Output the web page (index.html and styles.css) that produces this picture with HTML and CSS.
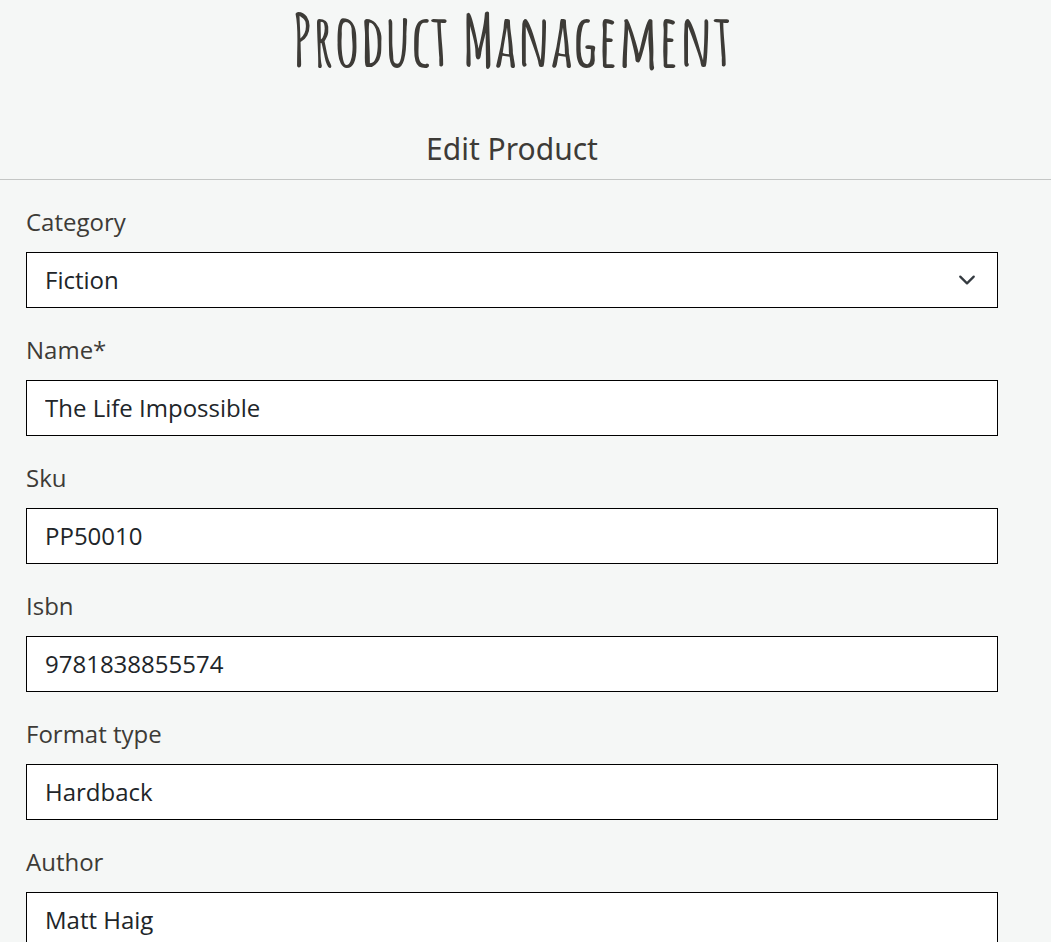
FILE: index.html
```html
<!DOCTYPE html>
<html lang="en">
<head>
<meta charset="utf-8">
<meta name="viewport" content="width=device-width, initial-scale=1">
<title>Product Management</title>
<link rel="stylesheet" href="styles.css">
</head>
<body>
<header class="page-header">
  <h1 class="page-title">Product Management</h1>
  <h2 class="page-subtitle">Edit Product</h2>
</header>
<hr class="divider">
<form class="product-form">
  <div class="field">
    <label class="field-label" for="category">Category</label>
    <div class="select-wrap">
      <select class="control select" id="category"><option>Fiction</option></select>
      <svg class="chevron" viewBox="0 0 16 16" aria-hidden="true"><path d="M2 5l6 6 6-6"/></svg>
    </div>
  </div>
  <div class="field">
    <label class="field-label" for="name">Name*</label>
    <input class="control" id="name" type="text" value="The Life Impossible">
  </div>
  <div class="field">
    <label class="field-label" for="sku">Sku</label>
    <input class="control" id="sku" type="text" value="PP50010">
  </div>
  <div class="field">
    <label class="field-label" for="isbn">Isbn</label>
    <input class="control" id="isbn" type="text" value="9781838855574">
  </div>
  <div class="field">
    <label class="field-label" for="format">Format type</label>
    <input class="control" id="format" type="text" value="Hardback">
  </div>
  <div class="field">
    <label class="field-label" for="author">Author</label>
    <input class="control" id="author" type="text" value="Matt Haig">
  </div>
</form>
</body>
</html>
```
FILE: styles.css
```css
* { box-sizing: border-box; }
html { overflow: hidden; }
body {
  margin: 0;
  background: #f5f7f6;
  color: #3d3b37;
  font: 24px/36px "Open Sans", "Noto Sans", sans-serif;
}
.page-header {
  padding-right: 27px;
  text-align: center;
}
.page-title {
  margin: 0;
  padding-bottom: 49px;
  font-family: "Amatic SC", "Open Sans", sans-serif;
  font-size: 72px;
  line-height: 80px;
  font-weight: 700;
}
.page-subtitle {
  margin: 0;
  padding-bottom: 11px;
  font-family: "Noto Sans", "Open Sans", sans-serif;
  font-size: 30px;
  line-height: 39px;
  font-weight: 400;
}
.divider {
  margin: 0;
  border: 0;
  border-top: 1px solid #c4c6c5;
}
.product-form {
  display: grid;
  gap: 24px;
  padding: 24px 53px 24px 26px;
}
.field {
  display: grid;
  gap: 12px;
}
.select-wrap { position: relative; }
.control {
  display: block;
  width: 100%;
  height: 56px;
  margin: 0;
  padding: 8px 18px 10px;
  border: 1px solid #000;
  border-radius: 0;
  background: #fff;
  color: #212529;
  font: inherit;
  appearance: none;
}
.select { padding-block: 9px; }
.chevron {
  position: absolute;
  right: 22px;
  top: 19px;
  width: 18px;
  height: 18px;
  fill: none;
  stroke: #343a40;
  stroke-width: 2;
  stroke-linecap: round;
  stroke-linejoin: round;
  pointer-events: none;
}
```
